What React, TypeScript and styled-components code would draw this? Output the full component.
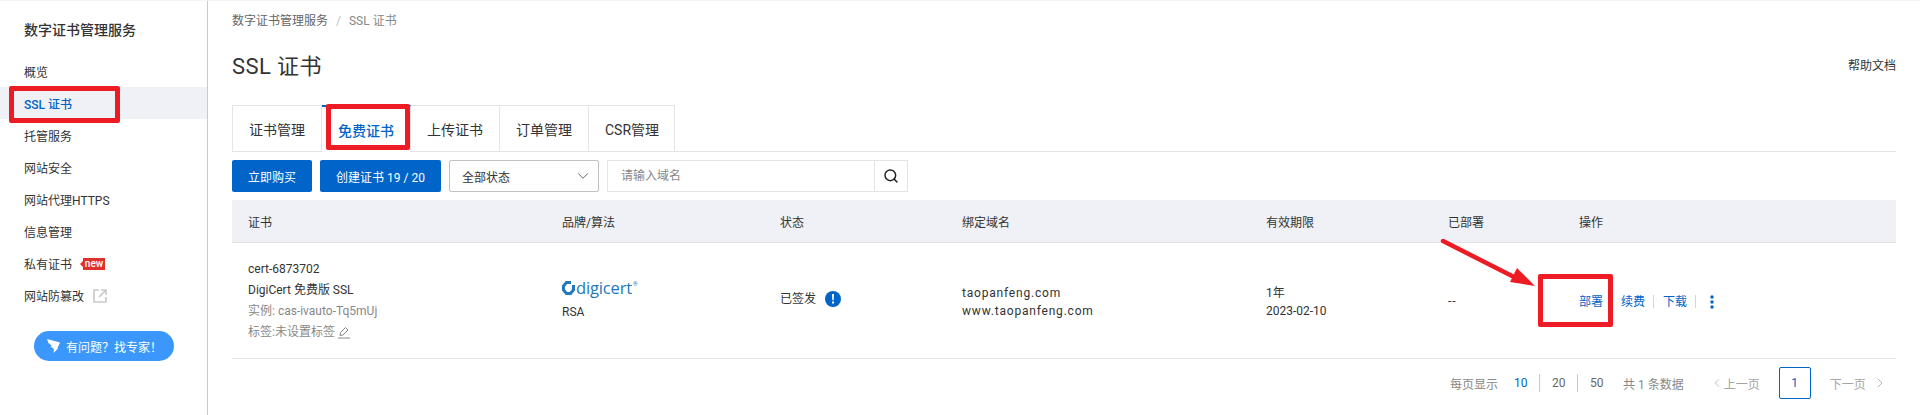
import React from "react";
import styled, { createGlobalStyle } from "styled-components";
import { ChevronDown, ChevronLeft, ChevronRight, Search } from "lucide-react";

const Global = createGlobalStyle`
  html, body { margin: 0; padding: 0; background: #fff; overflow: hidden; }
  body { font-family: Roboto, "Noto Sans CJK SC", sans-serif; font-size: 12px; color: #333; }
  * { box-sizing: border-box; }
`;

const Page = styled.div`
  position: relative;
  display: flex;
  width: 1920px;
  height: 415px;
  border-top: 1px solid #f4f4f4;
  overflow: hidden;
`;

const Sidebar = styled.aside`
  flex: 0 0 208px;
  border-right: 1px solid #c8c9cc;
`;

const SideTitle = styled.div`
  padding: 19px 0 0 24px;
  height: 54px;
  line-height: 20px;
  font-size: 14px;
  font-weight: 500;
  color: #333;
`;

const SideItem = styled.div<{ $active?: boolean }>`
  display: flex;
  align-items: center;
  height: 32.14px;
  padding-left: 24px;
  color: ${(p) => (p.$active ? "#0064c8" : "#333")};
  font-weight: ${(p) => (p.$active ? 500 : 400)};
  background: ${(p) => (p.$active ? "#eff1f6" : "transparent")};
`;

const NewBadge = styled.span`
  position: relative;
  display: inline-block;
  margin-left: 11px;
  width: 22px;
  height: 12px;
  line-height: 12px;
  text-align: center;
  background: #e0302d;
  color: #fff;
  font-size: 10px;
  font-weight: 500;
  &::before {
    content: "";
    position: absolute;
    left: -3px;
    top: 3px;
    border-top: 3px solid transparent;
    border-bottom: 3px solid transparent;
    border-right: 3px solid #e0302d;
  }
`;

const ExternalIcon = styled.svg`
  margin-left: 9px;
`;

const HelpButton = styled.div`
  display: flex;
  align-items: center;
  gap: 6px;
  margin: 19px 0 0 34px;
  width: 140px;
  height: 30px;
  padding-left: 13px;
  border-radius: 15px;
  background: #3b97fb;
  color: #fff;
`;

const Main = styled.main`
  flex: 1;
  min-width: 0;
  padding: 0 24px;
`;

const Breadcrumb = styled.div`
  display: flex;
  gap: 8px;
  padding-top: 12px;
  height: 28px;
  line-height: 16px;
  color: #666;
`;

const CrumbSep = styled.span`
  color: #c1c1c1;
`;

const CrumbLast = styled.span`
  color: #888;
`;

const HeadRow = styled.div`
  display: flex;
  justify-content: space-between;
  align-items: center;
  margin-top: 20px;
  height: 30px;
`;

const Title = styled.h1`
  margin: 0;
  font-size: 22px;
  font-weight: 400;
  letter-spacing: 0.4px;
  color: #333;
`;

const HelpLink = styled.span`
  color: #333;
  margin-top: 1px;
`;

const Tabs = styled.div`
  display: flex;
  margin-top: 26px;
  height: 47px;
  border-bottom: 1px solid #e3e4e6;
`;

const Tab = styled.div<{ $active?: boolean; $first?: boolean; $last?: boolean }>`
  display: flex;
  align-items: center;
  height: 47px;
  padding: 0 ${(p) => (p.$last ? 15 : 16)}px 0 16px;
  font-size: 14px;
  background: #fff;
  color: ${(p) => (p.$active ? "#0064c8" : "#333")};
  font-weight: ${(p) => (p.$active ? 500 : 400)};
  border-right: 1px solid #e3e4e6;
  border-left: ${(p) => (p.$first ? "1px solid #e3e4e6" : "0")};
  border-top: ${(p) => (p.$active ? "2px solid #0064c8" : "1px solid #e3e4e6")};
  border-bottom: ${(p) => (p.$active ? "0" : "1px solid #e3e4e6")};
`;

const Toolbar = styled.div`
  display: flex;
  gap: 8px;
  margin-top: 8px;
  height: 32px;
`;

const PrimaryButton = styled.div`
  display: flex;
  align-items: center;
  height: 32px;
  padding: 0 16px;
  border-radius: 2px;
  background: #0064c8;
  color: #fff;
`;

const Select = styled.div`
  display: flex;
  align-items: center;
  justify-content: space-between;
  width: 150px;
  height: 32px;
  padding: 0 6px 0 12px;
  border: 1px solid #c1c1c1;
  border-radius: 2px;
`;

const SearchBox = styled.div`
  display: flex;
  width: 301px;
  height: 32px;
  border: 1px solid #e3e4e6;
`;

const Placeholder = styled.div`
  flex: 1;
  line-height: 30px;
  padding-left: 13px;
  color: #888;
`;

const SearchButton = styled.div`
  display: flex;
  align-items: center;
  justify-content: center;
  width: 33px;
  border-left: 1px solid #e3e4e6;
  color: #222;
`;

const columns = "314px 218px 182px 304px 182px 131px 1fr";

const TableHead = styled.div`
  display: grid;
  grid-template-columns: ${columns};
  align-items: center;
  margin-top: 8px;
  height: 43px;
  background: #eff1f6;
  border-bottom: 1px solid #e3e4e6;
`;

const HeadCell = styled.div`
  padding-left: 16px;
  color: #333;
`;

const TableRow = styled.div`
  display: grid;
  grid-template-columns: ${columns};
  align-items: center;
  height: 116px;
  border-bottom: 1px solid #e3e4e6;
`;

const Cell = styled.div`
  padding-left: 16px;
  line-height: 18px;
  color: #333;
`;

const LowerCell = styled(Cell)`
  margin-top: 2px;
`;

const DomainCell = styled(LowerCell)`
  letter-spacing: 0.8px;
`;

const DashCell = styled(Cell)`
  letter-spacing: 1px;
`;

const CertLine = styled.div<{ $muted?: boolean }>`
  display: flex;
  align-items: center;
  gap: 3px;
  height: 21px;
  color: ${(p) => (p.$muted ? "#888" : "#333")};
`;

const Logo = styled.div`
  display: flex;
  align-items: center;
  gap: 1px;
  height: 16px;
  margin-bottom: 7px;
`;

const LogoWord = styled.span`
  font-family: "Open Sans", sans-serif;
  font-size: 16.5px;
  font-weight: 500;
  letter-spacing: -0.15px;
  color: #2379bb;
`;

const LogoMark = styled.sup`
  font-size: 6px;
  line-height: 1;
  color: #2379bb;
  margin-top: -9px;
`;

const StatusCell = styled(Cell)`
  display: flex;
  align-items: center;
  gap: 9px;
  margin-top: -3px;
`;

const Actions = styled(LowerCell)`
  display: flex;
  align-items: center;
`;

const ActionLink = styled.span<{ $gap?: number }>`
  margin-right: ${(p) => p.$gap ?? 0}px;
  color: #0064c8;
`;

const ActionSep = styled.span<{ $wide?: boolean }>`
  width: 1px;
  height: 13px;
  margin: 0 ${(p) => (p.$wide ? "14px" : "9px")} 0 8px;
  background: #d5d6d9;
`;

const Dots = styled.svg`
  display: block;
`;

const Pager = styled.div`
  display: flex;
  align-items: center;
  height: 32px;
  margin-top: 8px;
  padding-left: 1218px;
  color: #888;
`;

const PageSize = styled.span<{ $active?: boolean; $left?: number }>`
  width: 13px;
  margin-left: ${(p) => p.$left ?? 0}px;
  color: ${(p) => (p.$active ? "#0064c8" : "#666")};
`;

const PagerSep = styled.span`
  width: 1px;
  height: 18px;
  margin: 0 12px;
  background: #c8c9cc;
`;

const PageLabel = styled.span<{ $left?: number }>`
  display: inline-flex;
  align-items: center;
  gap: 6px;
  margin-left: ${(p) => p.$left ?? 0}px;
  color: #a5a5a5;
`;

const PrevLabel = styled(PageLabel)`
  gap: 0;
`;

const InfoLabel = styled.span<{ $left?: number }>`
  margin-left: ${(p) => p.$left ?? 0}px;
  color: #888;
`;

const PageNumber = styled.div`
  display: flex;
  align-items: center;
  justify-content: center;
  width: 32px;
  height: 32px;
  margin-left: 19px;
  border: 1px solid #0064c8;
  border-radius: 2px;
  color: #0064c8;
`;

const RedBox = styled.div<{ $x: number; $y: number; $w: number; $h: number }>`
  position: absolute;
  left: ${(p) => p.$x}px;
  top: ${(p) => p.$y}px;
  width: ${(p) => p.$w}px;
  height: ${(p) => p.$h}px;
  border: 5px solid #ed1c24;
  border-radius: 2px;
  pointer-events: none;
`;

const ArrowSvg = styled.svg`
  position: absolute;
  left: 1440px;
  top: 238px;
  pointer-events: none;
`;

const sideItems = ["概览", "SSL 证书", "托管服务", "网站安全", "网站代理HTTPS", "信息管理"];
const tabs = ["证书管理", "免费证书", "上传证书", "订单管理", "CSR管理"];
const heads = ["证书", "品牌/算法", "状态", "绑定域名", "有效期限", "已部署", "操作"];

export default function App() {
  return (
    <Page>
      <Global />
      <Sidebar>
        <SideTitle>数字证书管理服务</SideTitle>
        {sideItems.map((t) => (
          <SideItem key={t} $active={t === "SSL 证书"}>{t}</SideItem>
        ))}
        <SideItem>私有证书<NewBadge>new</NewBadge></SideItem>
        <SideItem>
          网站防篡改
          <ExternalIcon width="14" height="14" viewBox="0 0 14 14" fill="none" stroke="#c8c9cc" strokeWidth="1.6">
            <path d="M6 1H1v12h12V8" />
            <path d="M6 8l6.5-6.5M8 1h5v5" />
          </ExternalIcon>
        </SideItem>
        <HelpButton>
          <svg width="13" height="14" viewBox="0 0 13 14" fill="#fff">
            <path d="M0 0L13 3.5 10.5 9 11 9.5 6.5 14 7 10 3.5 7.5 5 7 1.5 4z" />
          </svg>
          有问题？找专家！
        </HelpButton>
      </Sidebar>
      <Main>
        <Breadcrumb>
          <span>数字证书管理服务</span>
          <CrumbSep>/</CrumbSep>
          <CrumbLast>SSL 证书</CrumbLast>
        </Breadcrumb>
        <HeadRow>
          <Title>SSL 证书</Title>
          <HelpLink>帮助文档</HelpLink>
        </HeadRow>
        <Tabs>
          {tabs.map((t, i) => (
            <Tab key={t} $first={i === 0} $active={i === 1} $last={i === 4}>{t}</Tab>
          ))}
        </Tabs>
        <Toolbar>
          <PrimaryButton>立即购买</PrimaryButton>
          <PrimaryButton>创建证书 19 / 20</PrimaryButton>
          <Select>
            全部状态
            <ChevronDown size={18} strokeWidth={1.1} color="#444" />
          </Select>
          <SearchBox>
            <Placeholder>请输入域名</Placeholder>
            <SearchButton><Search size={16} strokeWidth={2.2} /></SearchButton>
          </SearchBox>
        </Toolbar>
        <TableHead>
          {heads.map((h) => <HeadCell key={h}>{h}</HeadCell>)}
        </TableHead>
        <TableRow>
          <Cell>
            <CertLine>cert-6873702</CertLine>
            <CertLine>DigiCert 免费版 SSL</CertLine>
            <CertLine $muted>实例: cas-ivauto-Tq5mUj</CertLine>
            <CertLine $muted>
              标签:未设置标签
              <svg width="12" height="13" viewBox="0 0 12 13" fill="none" stroke="#888" strokeWidth="1">
                <path d="M2 9.5l.5-3L7.5 1.5l2.5 2.5-5 5z" />
                <path d="M0 12h12" />
              </svg>
            </CertLine>
          </Cell>
          <Cell>
            <Logo>
              <svg width="13" height="16" viewBox="0 0 13 16" fill="none" stroke="#2379bb" strokeWidth="3">
                <path d="M9 2.5H4.5l-3 3.5v4l3 3.5h4l3-3.5V5" />
              </svg>
              <LogoWord>digicert</LogoWord>
              <LogoMark>®</LogoMark>
            </Logo>
            <div>RSA</div>
          </Cell>
          <StatusCell>
            已签发
            <svg width="16" height="16" viewBox="0 0 16 16">
              <circle cx="8" cy="8" r="8" fill="#0064c8" />
              <path d="M7 3h2l-.3 6.2H7.3zM7 10.6h2v2H7z" fill="#fff" />
            </svg>
          </StatusCell>
          <DomainCell>
            <div>taopanfeng.com</div>
            <div>www.taopanfeng.com</div>
          </DomainCell>
          <LowerCell>
            <div>1年</div>
            <div>2023-02-10</div>
          </LowerCell>
          <DashCell>--</DashCell>
          <Actions>
            <ActionLink $gap={18}>部署</ActionLink>
            <ActionLink>续费</ActionLink>
            <ActionSep />
            <ActionLink>下载</ActionLink>
            <ActionSep $wide />
            <Dots width="4" height="14" viewBox="0 0 4 14" fill="#0064c8">
              <circle cx="2" cy="2" r="1.7" />
              <circle cx="2" cy="7" r="1.7" />
              <circle cx="2" cy="12" r="1.7" />
            </Dots>
          </Actions>
        </TableRow>
        <Pager>
          <InfoLabel>每页显示</InfoLabel>
          <PageSize $active $left={16}>10</PageSize>
          <PagerSep />
          <PageSize>20</PageSize>
          <PagerSep />
          <PageSize>50</PageSize>
          <InfoLabel $left={20}>共 1 条数据</InfoLabel>
          <PrevLabel $left={26}><ChevronLeft size={14} strokeWidth={1.2} />上一页</PrevLabel>
          <PageNumber>1</PageNumber>
          <PageLabel $left={19}>下一页<ChevronRight size={16} strokeWidth={1.2} /></PageLabel>
        </Pager>
      </Main>
      <RedBox $x={9} $y={85} $w={111} $h={37} />
      <RedBox $x={326} $y={103} $w={84} $h={46} />
      <RedBox $x={1538} $y={273} $w={75} $h={53} />
      <ArrowSvg width="100" height="52" viewBox="0 0 100 52">
        <path d="M3 2L78 40" stroke="#ed1c24" strokeWidth="4.5" strokeLinecap="round" />
        <path d="M95 47L77 29 70 43z" fill="#ed1c24" />
      </ArrowSvg>
    </Page>
  );
}
